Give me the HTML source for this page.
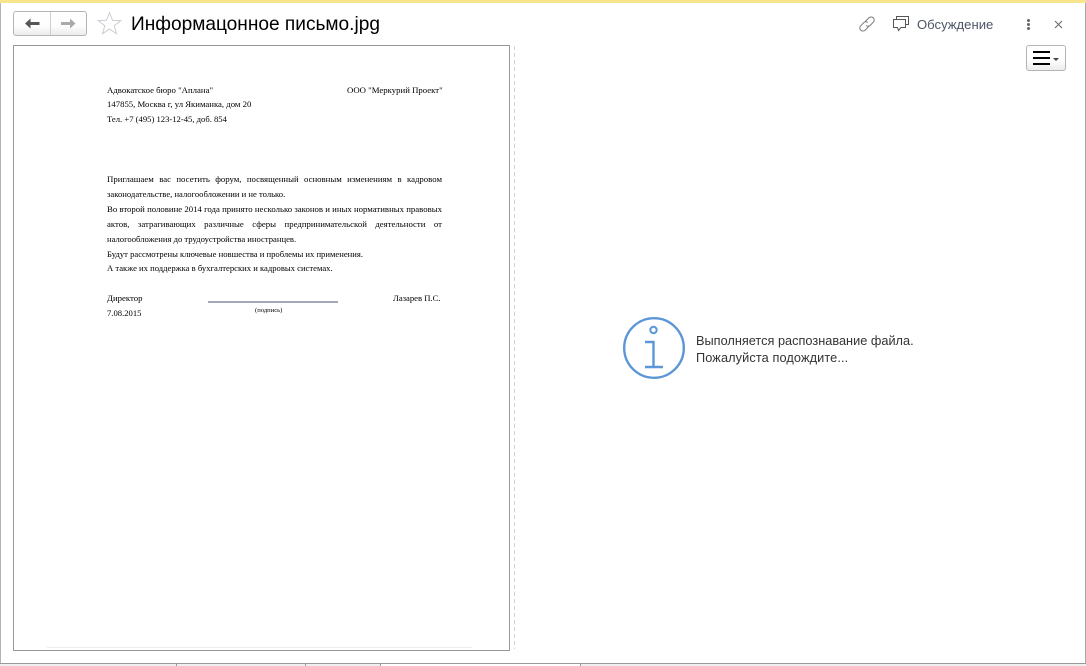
<!DOCTYPE html>
<html lang="ru">
<head>
<meta charset="utf-8">
<style>
html,body{margin:0;padding:0;background:#fff}
body{width:1086px;height:666px;position:relative;overflow:hidden;font-family:"Liberation Sans",sans-serif}
.a{position:absolute;white-space:nowrap}
.l{position:absolute;white-space:nowrap;font:8.75px/12px "Liberation Serif",serif;color:#000;left:107px}
.s{font-size:8.62px}
.j{width:335px;white-space:normal;text-align:justify;text-align-last:justify}
.doc{position:absolute;left:0;top:0;width:1086px;height:666px;filter:blur(.3px)}
.m{font-size:12.75px;line-height:16px;color:#333;left:696px}
</style>
</head>
<body>
<!-- window frame -->
<div class="a" style="left:0;top:0;width:1086px;height:3px;background:#f8e68f"></div>
<div class="a" style="left:0;top:3px;width:1px;height:660px;background:#b4b4b4"></div>
<div class="a" style="left:1085px;top:3px;width:1px;height:660px;background:#a8a8a8"></div>
<div class="a" style="left:0;top:663px;width:1086px;height:1px;background:#999"></div>
<div class="a" style="left:0;top:664px;width:1086px;height:2px;background:#efefef"></div>
<div class="a" style="left:380px;top:664px;width:200px;height:2px;background:#fff"></div>
<div class="a" style="left:176px;top:663px;width:1px;height:3px;background:#999"></div>
<div class="a" style="left:305px;top:663px;width:1px;height:3px;background:#999"></div>
<div class="a" style="left:380px;top:663px;width:1px;height:3px;background:#999"></div>
<div class="a" style="left:580px;top:663px;width:1px;height:3px;background:#999"></div>

<!-- nav buttons -->
<div class="a" style="left:13px;top:11px;width:72px;height:23px;border:1px solid #b4b4b4;border-radius:3px;background:linear-gradient(#fff 0%,#fdfdfd 60%,#ececec 100%)"></div>
<div class="a" style="left:50px;top:12px;width:1px;height:23px;background:#cfcfcf"></div>
<svg class="a" style="left:25px;top:18px" width="15" height="11" viewBox="0 0 15 11"><path d="M0 5.5 L5.5 .5 V4 H14.5 V7 H5.5 V10.5 Z" fill="#555"/></svg>
<svg class="a" style="left:61px;top:18px" width="15" height="11" viewBox="0 0 15 11"><path d="M14.5 5.5 L9 .5 V4 H0 V7 H9 V10.5 Z" fill="#aaa"/></svg>

<!-- star -->
<svg class="a" style="left:97px;top:11px" width="25" height="24" viewBox="0 0 25 24"><path d="M12.5 1.5 L15.5 9.3 L23.7 9.6 L17.2 14.7 L19.5 22.7 L12.5 18.1 L5.5 22.7 L7.8 14.7 L1.3 9.6 L9.5 9.3 Z" fill="#fff" stroke="#c9ced3" stroke-width="1"/></svg>

<!-- title -->
<div class="a" style="left:131px;top:12px;font-size:19.1px;line-height:26px;color:#000">Информацонное письмо.jpg</div>

<!-- link icon -->
<svg class="a" style="left:858px;top:15px" width="18" height="18" viewBox="0 0 18 18" fill="none" stroke="#7a7a7a" stroke-width="1"><path d="M7.2 6.6 L10.8 2.9 C12 1.7 14 1.6 15.3 2.9 C16.5 4.1 16.5 6 15.3 7.2 L12.2 10.4 C11 11.6 9.2 11.5 8.2 10.4"/><path d="M10.8 11.4 L7.2 15.1 C6 16.3 4 16.4 2.7 15.1 C1.5 13.9 1.5 12 2.7 10.8 L5.8 7.6 C7 6.4 8.8 6.5 9.8 7.6"/></svg>

<!-- discussion icon -->
<svg class="a" style="left:892px;top:15px" width="18" height="18" viewBox="0 0 18 18" fill="none" stroke="#555" stroke-width="1"><path d="M4.5 4.5 V1.5 H16.5 V9.5 H13.5"/><path d="M1.5 4.5 H13.5 V12.5 H9 L6.5 15.5 L5.5 12.5 H1.5 Z" fill="#fff"/></svg>
<div class="a" style="left:917px;top:17px;font-size:13.1px;line-height:16px;color:#4d5566">Обсуждение</div>

<!-- dots -->
<div class="a" style="left:1027px;top:19px;width:3px;height:3px;border-radius:50%;background:#666"></div>
<div class="a" style="left:1027px;top:23px;width:3px;height:3px;border-radius:50%;background:#666"></div>
<div class="a" style="left:1027px;top:27px;width:3px;height:3px;border-radius:50%;background:#666"></div>

<!-- close -->
<svg class="a" style="left:1054px;top:20px" width="9" height="9" viewBox="0 0 9 9" stroke="#666" stroke-width="1" fill="none"><path d="M1 1 L8 8 M8 1 L1 8"/></svg>

<!-- menu button -->
<div class="a" style="left:1026px;top:45px;width:38px;height:24px;border:1px solid #b4b4b4;border-radius:3px;background:linear-gradient(#fff 0%,#fdfdfd 60%,#ececec 100%)"></div>
<div class="a" style="left:1033px;top:51px;width:17px;height:2px;background:#000"></div>
<div class="a" style="left:1033px;top:57px;width:17px;height:2px;background:#000"></div>
<div class="a" style="left:1033px;top:63px;width:17px;height:2px;background:#000"></div>
<svg class="a" style="left:1053px;top:58px" width="6" height="3" viewBox="0 0 6 3"><path d="M0 0 H6 L3 3 Z" fill="#444"/></svg>

<!-- document frame -->
<div class="a" style="left:13px;top:45px;width:495px;height:604px;border:1px solid #999;background:#fff"></div>
<div class="a" style="left:47px;top:647px;width:425px;height:1px;background:#ededed"></div>

<!-- splitter -->
<div class="a" style="left:514px;top:46px;width:1px;height:603px;background:repeating-linear-gradient(#d2d2d2 0 4px,transparent 4px 7px)"></div>

<!-- document text -->
<div class="doc">
<div class="l" style="top:84px">Адвокатское бюро "Аплана"</div>
<div class="l" style="top:84px;left:347px">ООО "Меркурий Проект"</div>
<div class="l s" style="top:98px;font-size:8.72px">147855, Москва г, ул Якиманка, дом 20</div>
<div class="l s" style="top:113px">Тел. +7 (495) 123-12-45, доб. 854</div>
<div class="l j" style="top:173px">Приглашаем вас посетить форум, посвященный основным изменениям в кадровом</div>
<div class="l s" style="top:188px">законодательстве, налогообложении и не только.</div>
<div class="l j" style="top:203px">Во второй половине 2014 года принято несколько законов и иных нормативных правовых</div>
<div class="l j" style="top:218px">актов, затрагивающих различные сферы предпринимательской деятельности от</div>
<div class="l s" style="top:233px">налогообложения до трудоустройства иностранцев.</div>
<div class="l s" style="top:248px">Будут рассмотрены ключевые новшества и проблемы их применения.</div>
<div class="l s" style="top:262px">А также их поддержка в бухгалтерских и кадровых системах.</div>
<div class="l" style="top:292px">Директор</div>
<div class="l s" style="top:292px;left:393px">Лазарев П.С.</div>
<div class="l s" style="top:307px">7.08.2015</div>
<div class="l" style="top:305px;left:255px;font-size:6.6px">(подпись)</div>
<div class="a" style="left:208px;top:301px;width:130px;height:1.5px;background:#a3a8bb"></div>
</div>

<!-- info icon -->
<svg class="a" style="left:622px;top:317px" width="64" height="64" viewBox="0 0 64 64" fill="none" stroke="#5b96d6" stroke-width="2.4"><circle cx="32" cy="31" r="29.8"/><circle cx="31.5" cy="13" r="3.2" stroke-width="2"/><path d="M23 25 H31.5 V50 M23 50 H41"/></svg>

<!-- message -->
<div class="a m" style="top:333px">Выполняется распознавание файла.</div>
<div class="a m" style="top:350px;letter-spacing:.1px">Пожалуйста подождите...</div>
</body>
</html>
